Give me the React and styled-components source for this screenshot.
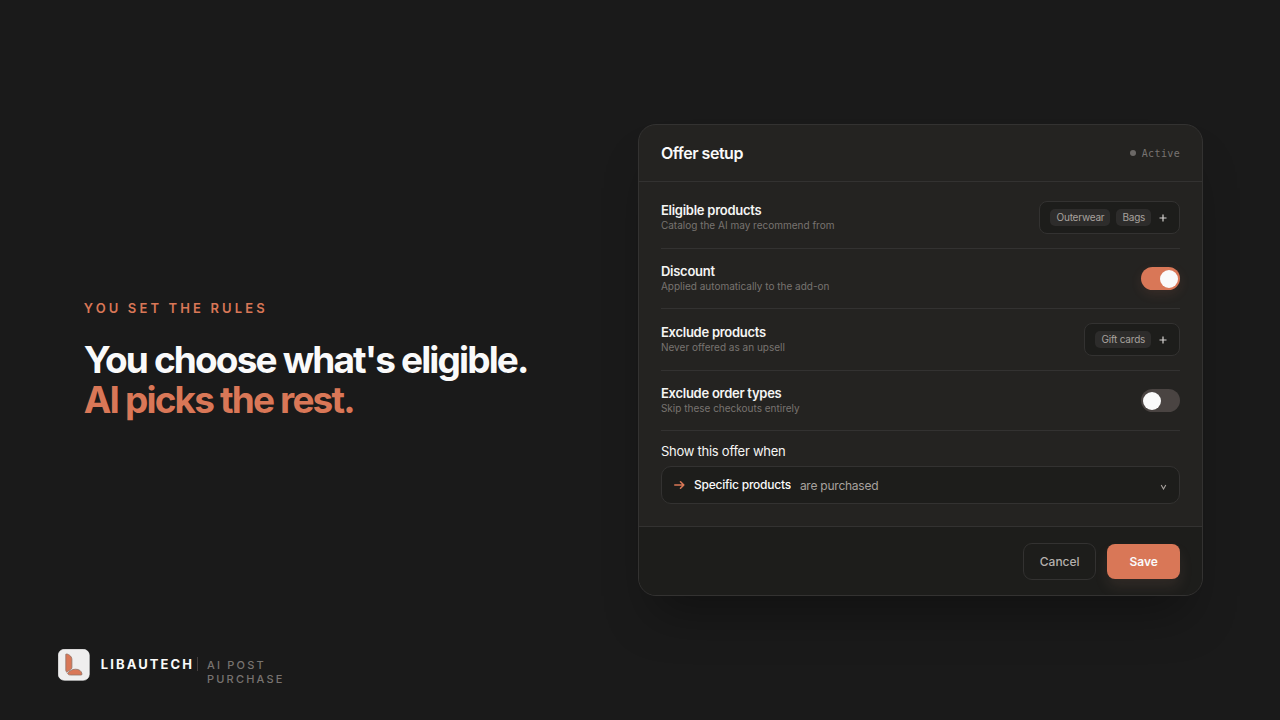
import React, { useState } from "react";
import styled, { createGlobalStyle } from "styled-components";

const GlobalStyle = createGlobalStyle`
  * {
    box-sizing: border-box;
  }
  body {
    margin: 0;
    background: #1a1a1a;
    color: #fafafa;
    font-family: Inter, sans-serif;
  }
  button, select, input {
    font-family: inherit;
    margin: 0;
  }
`;

const Page = styled.div`
  min-height: 100vh;
  display: grid;
  grid-template-rows: 1fr auto 1fr;
  padding: 0 6%;
`;

const Main = styled.main`
  grid-row: 2;
  display: grid;
  grid-template-columns: minmax(0, 1fr) minmax(0, 1.02fr);
  align-items: center;
  padding-left: 7px;
`;

const Eyebrow = styled.p`
  margin: 0 0 24px;
  font-size: 13px;
  line-height: 16px;
  font-weight: 600;
  letter-spacing: 0.24em;
  text-transform: uppercase;
  color: #d97757;
`;

const Headline = styled.h1`
  margin: 0;
  font-size: 37px;
  line-height: 40px;
  font-weight: 700;
  letter-spacing: -0.05em;
`;

const Accent = styled.span`
  display: block;
  color: #d97757;
`;

const Card = styled.form`
  background: #242321;
  border: 1px solid #333231;
  border-radius: 18px;
  overflow: hidden;
`;

const CardShadow = styled.div`
  border-radius: 18px;
  box-shadow: 0 32px 48px -16px rgba(0, 0, 0, 0.35);
`;

const CardHeader = styled.header`
  display: flex;
  align-items: center;
  justify-content: space-between;
  height: 57px;
  padding: 0 22px;
  border-bottom: 1px solid #333231;
`;

const CardTitle = styled.h2`
  margin: 0;
  font-size: 16px;
  line-height: 20px;
  font-weight: 600;
  letter-spacing: -0.03em;
`;

const Status = styled.span`
  display: flex;
  align-items: center;
  gap: 6px;
  font-family: "DejaVu Sans Mono", monospace;
  font-size: 10px;
  letter-spacing: 0.04em;
  color: #777371;

  &::before {
    content: "";
    width: 6px;
    height: 6px;
    border-radius: 50%;
    background: #6b6866;
  }
`;

const CardBody = styled.div`
  padding: 5px 22px 22px;
`;

const SettingRow = styled.div`
  display: flex;
  align-items: center;
  justify-content: space-between;
  padding: 14px 0;
  border-bottom: 1px solid #333231;
`;

const RowTitle = styled.label`
  display: block;
  font-size: 13px;
  line-height: 16px;
  font-weight: 600;
  letter-spacing: -0.02em;
  color: #f5f5f4;
`;

const RowHint = styled.p`
  margin: 0;
  font-size: 10px;
  line-height: 15px;
  color: #787370;
`;

const Picker = styled.div`
  display: flex;
  align-items: center;
  gap: 6px;
  height: 33px;
  padding: 0 10px;
  background: #1d1d1b;
  border: 1px solid #333231;
  border-radius: 8px;
`;

const Chip = styled.span`
  padding: 0 6px;
  font-size: 10px;
  line-height: 17px;
  letter-spacing: -0.02em;
  color: #a8a29e;
  background: #2d2c2b;
  border-radius: 5px;
`;

const AddButton = styled.button`
  width: 12px;
  height: 16px;
  padding: 0;
  display: grid;
  place-items: center;
  background: none;
  border: 0;
  color: #d6d3d1;
`;

const Switch = styled.input`
  appearance: none;
  display: flex;
  align-items: center;
  width: 39px;
  height: 23px;
  padding: 0 2px;
  border-radius: 12px;
  background: #4a4442;

  &::before {
    content: "";
    width: 18px;
    height: 18px;
    border-radius: 50%;
    background: #fafafa;
  }
  &:checked {
    justify-content: flex-end;
    background: #d97757;
    box-shadow: 0 4px 12px rgba(217, 119, 87, 0.12);
  }
`;

const TriggerLabel = styled.label`
  display: block;
  padding: 12px 0 7px;
  font-size: 13px;
  line-height: 16px;
  letter-spacing: -0.02em;
  color: #f5f5f4;
`;

const TriggerBox = styled.div`
  display: flex;
  align-items: center;
  height: 38px;
  padding: 0 12px;
  background: #1d1d1b;
  border: 1px solid #333231;
  border-radius: 10px;
  font-size: 12px;
  letter-spacing: -0.02em;
  color: #a8a29e;
`;

const TriggerSelect = styled.select`
  appearance: none;
  field-sizing: content;
  margin: 0 9px 0 8px;
  padding: 0;
  border: 0;
  background: transparent;
  color: #fafafa;
  font-size: 12px;
  line-height: 16px;
  font-weight: 500;
  letter-spacing: -0.02em;
`;

const Chevron = styled.svg`
  margin-left: auto;
`;

const CardFooter = styled.footer`
  display: flex;
  align-items: center;
  justify-content: flex-end;
  gap: 11px;
  height: 69px;
  padding: 0 22px;
  background: #1d1d1b;
  border-top: 1px solid #333231;
`;

const Button = styled.button`
  width: 73px;
  height: ${({ $primary }) => ($primary ? "35px" : "37px")};
  padding: 0;
  border: ${({ $primary }) => ($primary ? "0" : "1px solid #333231")};
  border-radius: ${({ $primary }) => ($primary ? "8px" : "9px")};
  background: ${({ $primary }) => ($primary ? "#d97757" : "#1d1d1b")};
  box-shadow: ${({ $primary }) => ($primary ? "0 8px 14px rgba(217, 160, 140, 0.1)" : "none")};
  color: ${({ $primary }) => ($primary ? "#fafafa" : "#b5b0ad")};
  font-size: 12px;
  font-weight: ${({ $primary }) => ($primary ? 600 : 500)};
`;

const Brand = styled.div`
  grid-row: 3;
  align-self: end;
  display: flex;
  align-items: flex-start;
  margin-left: -19px;
  padding-bottom: 34px;
`;

const BrandName = styled.span`
  margin-left: 11px;
  font-size: 13px;
  line-height: 31px;
  font-weight: 700;
  letter-spacing: 0.16em;
`;

const BrandProduct = styled.span`
  width: 100px;
  margin: 9px 0 0 9px;
  font-size: 11px;
  line-height: 14px;
  font-weight: 500;
  letter-spacing: 0.2em;
  color: #787370;
`;

const Divider = styled.span`
  width: 1px;
  height: 14px;
  margin: 8px 0 0 3px;
  background: #443f3d;
`;

const Logo = () => (
  <svg width="32" height="32" viewBox="0 0 32 32" aria-hidden="true">
    <rect x="0.3" y="0.3" width="31" height="31" rx="6" fill="#efeeee" stroke="#fafafa" strokeWidth="0.6" />
    <path
      d="M7.800 5.200C9.500 4.300 13.900 7 13.900 10.300V18.500C13.900 19.600 13.300 20 12.600 20.600L8.800 23.200C8.200 22.800 7.800 22.300 7.800 21.300Z"
      fill="#d97757"
      stroke="#8f7468"
      strokeWidth="0.8"
    />
    <path
      d="M9.600 24.300C11.500 22.200 13.800 20.200 17.500 20.200C21 20.200 23.500 21.800 24 25C24 25.800 23.700 26 23 26H12.500C11 26 9.900 25.600 9.600 24.300Z"
      fill="#d97757"
      stroke="#8f7468"
      strokeWidth="0.8"
    />
  </svg>
);

const ChipPicker = ({ id, items }) => (
  <Picker>
    {items.map((item) => (
      <Chip key={item}>{item}</Chip>
    ))}
    <AddButton id={id} type="button">
      <svg width="8" height="8" viewBox="0 0 8 8" aria-hidden="true">
        <path d="M4 0.500v7M0.500 4h7" stroke="currentColor" strokeWidth="1.2" />
      </svg>
    </AddButton>
  </Picker>
);

const Setting = ({ id, title, hint, children }) => (
  <SettingRow>
    <div>
      <RowTitle htmlFor={id}>{title}</RowTitle>
      <RowHint>{hint}</RowHint>
    </div>
    {children}
  </SettingRow>
);

const OfferSetup = () => {
  const [discount, setDiscount] = useState(true);
  const [excludeOrders, setExcludeOrders] = useState(false);

  return (
    <CardShadow>
      <Card onSubmit={(e) => e.preventDefault()}>
        <CardHeader>
          <CardTitle>Offer setup</CardTitle>
          <Status>Active</Status>
        </CardHeader>
        <CardBody>
          <Setting id="eligible" title="Eligible products" hint="Catalog the AI may recommend from">
            <ChipPicker id="eligible" items={["Outerwear", "Bags"]} />
          </Setting>
          <Setting id="discount" title="Discount" hint="Applied automatically to the add-on">
            <Switch
              id="discount"
              type="checkbox"
              checked={discount}
              onChange={(e) => setDiscount(e.target.checked)}
            />
          </Setting>
          <Setting id="exclude" title="Exclude products" hint="Never offered as an upsell">
            <ChipPicker id="exclude" items={["Gift cards"]} />
          </Setting>
          <Setting id="orders" title="Exclude order types" hint="Skip these checkouts entirely">
            <Switch
              id="orders"
              type="checkbox"
              checked={excludeOrders}
              onChange={(e) => setExcludeOrders(e.target.checked)}
            />
          </Setting>
          <TriggerLabel htmlFor="trigger">Show this offer when</TriggerLabel>
          <TriggerBox>
            <svg width="12" height="12" viewBox="0 0 12 12" fill="none" stroke="#d97757" strokeWidth="1.6" aria-hidden="true">
              <path d="M0.800 6h9M6.500 2.800l3.300 3.200-3.300 3.200" strokeLinecap="round" strokeLinejoin="round" />
            </svg>
            <TriggerSelect id="trigger">
              <option>Specific products</option>
            </TriggerSelect>
            <span>are purchased</span>
            <Chevron width="7" height="10" viewBox="0 0 7 10" fill="none" stroke="#a8a29e" strokeWidth="1.1" aria-hidden="true">
              <path d="M1.200 5l2.300 4 2.300-4" />
            </Chevron>
          </TriggerBox>
        </CardBody>
        <CardFooter>
          <Button type="button">Cancel</Button>
          <Button type="submit" $primary>Save</Button>
        </CardFooter>
      </Card>
    </CardShadow>
  );
};

const App = () => (
  <>
    <GlobalStyle />
    <Page>
      <Main>
        <section>
          <Eyebrow>You set the rules</Eyebrow>
          <Headline>
            You choose what's eligible.
            <Accent>AI picks the rest.</Accent>
          </Headline>
        </section>
        <OfferSetup />
      </Main>
      <Brand>
        <Logo />
        <BrandName>LIBAUTECH</BrandName>
        <Divider />
        <BrandProduct>AI POST PURCHASE</BrandProduct>
      </Brand>
    </Page>
  </>
);

export default App;
